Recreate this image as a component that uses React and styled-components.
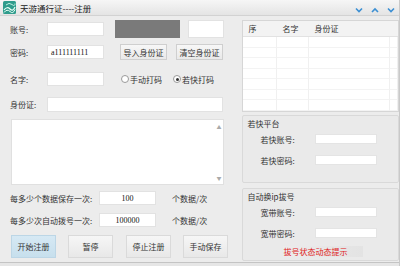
import React from 'react';
import styled, { createGlobalStyle } from 'styled-components';

const GlobalStyle = createGlobalStyle`
  html, body {
    margin: 0;
    padding: 0;
    background: #ececec;
  }
  * {
    box-sizing: border-box;
  }
`;

const Window = styled.div`
  width: 400px;
  height: 266px;
  background: #e6e6e6;
  font-family: "Noto Sans CJK SC", "Noto Sans", sans-serif;
  font-size: 8px;
  color: #333;
  display: flex;
  flex-direction: column;
  border-right: 1px solid #c9c9c9;
  overflow: hidden;
`;

const TitleBar = styled.div`
  height: 16px;
  display: flex;
  align-items: center;
  padding: 0 4px 0 3px;
  background: linear-gradient(#f6f6f6, #e4e4e4);
  border-bottom: 1px solid #d2d2d2;
  gap: 4px;
`;

const TitleText = styled.div`
  font-size: 8.5px;
  color: #222;
  flex: 1;
`;

const Controls = styled.div`
  display: flex;
  gap: 8px;
  padding-top: 4px;
`;

const Body = styled.div`
  height: 247px;
  display: flex;
  padding: 4px 0 0 10px;
  background: #ececec;
  border-bottom: 1px solid #c4c4c4;
`;

const LeftCol = styled.div`
  width: 230px;
  display: flex;
  flex-direction: column;
`;

const Row = styled.div`
  display: flex;
  align-items: center;
  height: ${p => p.h}px;
  margin-top: ${p => p.mt || 0}px;
`;

const Label = styled.div`
  width: ${p => p.w || 37}px;
  white-space: nowrap;
`;

const Field = styled.div`
  width: ${p => p.w || 57}px;
  height: ${p => p.h || 14}px;
  background: #fff;
  border: 1px solid #e2e2e2;
  margin-left: ${p => p.ml || 0}px;
  display: flex;
  align-items: center;
  justify-content: ${p => (p.center ? 'center' : 'flex-start')};
  padding-left: ${p => (p.center ? 0 : 3)}px;
  font-family: "Liberation Serif", serif;
  font-size: 8px;
  color: #111;
`;

const GrayBox = styled.div`
  width: 65px;
  height: 18px;
  margin-left: 11px;
  background: #7a7a7a;
`;

const SmallButton = styled.div`
  width: 47px;
  height: 16px;
  margin-left: ${p => p.ml}px;
  background: linear-gradient(#f7f7f7, #e9e9e9);
  border: 1px solid #cfcfcf;
  display: flex;
  align-items: center;
  justify-content: center;
  white-space: nowrap;
`;

const Radio = styled.div`
  display: flex;
  align-items: center;
  margin-left: ${p => p.ml}px;
  gap: 1px;
`;

const RadioDot = styled.span`
  width: 8px;
  height: 8px;
  border-radius: 50%;
  border: 1px solid #9a9a9a;
  background: #fff;
  display: flex;
  align-items: center;
  justify-content: center;
  &::after {
    content: '';
    width: 3px;
    height: 3px;
    border-radius: 50%;
    background: ${p => (p.checked ? '#333' : 'transparent')};
  }
`;

const TextArea = styled.div`
  width: 213px;
  height: 66px;
  margin-top: 6px;
  margin-left: 1px;
  background: #fff;
  border: 1px solid #e0e0e0;
  display: flex;
  justify-content: flex-end;
`;

const ScrollTrack = styled.div`
  width: 6px;
  display: flex;
  flex-direction: column;
  justify-content: space-between;
  align-items: center;
  padding: 3px 0;
  color: #aaa;
  font-size: 5px;
  margin-right: 1px;
`;

const Unit = styled.div`
  margin-left: 16px;
  white-space: nowrap;
`;

const ButtonRow = styled.div`
  display: flex;
  margin-top: 8px;
  margin-left: 1px;
  height: 23px;
`;

const ActionButton = styled.div`
  width: 45px;
  height: 23px;
  margin-left: ${p => p.ml || 0}px;
  display: flex;
  align-items: center;
  justify-content: center;
  background: ${p => (p.primary ? 'linear-gradient(#d6e9f4, #c7dfed)' : 'linear-gradient(#f6f6f6, #e8e8e8)')};
  border: 1px solid ${p => (p.primary ? '#bcd6e6' : '#dadada')};
  color: #333;
`;

const RightCol = styled.div`
  width: 157px;
  margin-left: 3px;
  display: flex;
  flex-direction: column;
`;

const Table = styled.div`
  height: 92px;
  border: 1px solid #d6d6d6;
  background: #fff;
  display: flex;
  flex-direction: column;
`;

const TableHead = styled.div`
  height: 16px;
  display: grid;
  grid-template-columns: 34px 32px 1fr;
  background: #f3f3f3;
  border-bottom: 1px solid #e2e2e2;
  align-items: center;
`;

const HeadCell = styled.div`
  padding-left: 5px;
`;

const TableBody = styled.div`
  flex: 1;
  display: grid;
  grid-template-columns: 34px 32px 1fr 8px;
  grid-auto-rows: 10.5px;
  overflow: hidden;
`;

const Cell = styled.div`
  border-right: 1px solid #f0f0f0;
  border-bottom: 1px solid #f3f3f3;
`;

const Group = styled.div`
  margin-top: ${p => p.mt}px;
  height: ${p => p.h}px;
  border: 1px solid #d9d9d9;
  border-radius: 2px;
  background: #eaeaea;
  padding: 3px 0 0 4px;
  display: flex;
  flex-direction: column;
`;

const GroupTitle = styled.div`
  height: 10px;
  line-height: 10px;
  white-space: nowrap;
`;

const GroupRow = styled.div`
  display: flex;
  align-items: center;
  height: 10px;
  margin-top: ${p => p.mt}px;
  padding-left: 13px;
`;

const GroupLabel = styled.div`
  width: 55px;
  white-space: nowrap;
`;

const GroupField = styled.div`
  width: 62px;
  height: 10px;
  background: #fff;
  border: 1px solid #e4e4e4;
`;

const Status = styled.div`
  margin: 8px 0 0 36px;
  width: 80px;
  height: 11px;
  display: flex;
  align-items: center;
  color: #e02020;
  background: linear-gradient(90deg, #ececec 0%, #e3e3e3 100%);
`;

const Chevron = ({ up }) => (
  <svg width="8" height="6" viewBox="0 0 8 6">
    <path
      d={up ? 'M1 5 L4 2 L7 5' : 'M1 1.5 L4 4.5 L7 1.5'}
      fill="none"
      stroke="#3b8fd3"
      strokeWidth="1.6"
    />
  </svg>
);

const AppIcon = () => (
  <svg width="13" height="13" viewBox="0 0 13 13">
    <rect x="0" y="0" width="13" height="13" rx="1.5" fill="#2f9c8c" />
    <path d="M1 9 Q4 5 7 8 T12 6" fill="none" stroke="#e8fff6" strokeWidth="1.2" />
    <path d="M1 11.5 Q4 7.5 7 10.5 T12 8.5" fill="none" stroke="#e8fff6" strokeWidth="1" />
    <path d="M3 4 Q6 1 9 3.5 T12 2.5" fill="none" stroke="#bdeee0" strokeWidth="1" />
  </svg>
);

const rows = Array.from({ length: 7 });

export default function App() {
  return (
    <>
      <GlobalStyle />
      <Window>
        <TitleBar>
          <AppIcon />
          <TitleText>天游通行证----注册</TitleText>
          <Controls>
            <Chevron />
            <Chevron up />
            <Chevron />
          </Controls>
        </TitleBar>
        <Body>
          <LeftCol>
            <Row h={18}>
              <Label>账号:</Label>
              <Field />
              <GrayBox />
              <Field w={36} h={18} ml={8} />
            </Row>
            <Row h={16} mt={6}>
              <Label>密码:</Label>
              <Field>a111111111</Field>
              <SmallButton ml={16}>导入身份证</SmallButton>
              <SmallButton ml={9}>清空身份证</SmallButton>
            </Row>
            <Row h={18} mt={10}>
              <Label>名字:</Label>
              <Field />
              <Radio ml={17}>
                <RadioDot />
                手动打码
              </Radio>
              <Radio ml={11}>
                <RadioDot checked />
                若快打码
              </Radio>
            </Row>
            <Row h={17} mt={8}>
              <Label>身份证:</Label>
              <Field w={176} h={15} />
            </Row>
            <TextArea>
              <ScrollTrack>
                <span>▲</span>
                <span>▼</span>
              </ScrollTrack>
            </TextArea>
            <Row h={14} mt={6}>
              <Label w={89}>每多少个数据保存一次:</Label>
              <Field center>100</Field>
              <Unit>个数据/次</Unit>
            </Row>
            <Row h={14} mt={8}>
              <Label w={89}>每多少次自动拨号一次:</Label>
              <Field center>100000</Field>
              <Unit>个数据/次</Unit>
            </Row>
            <ButtonRow>
              <ActionButton primary>开始注册</ActionButton>
              <ActionButton ml={12}>暂停</ActionButton>
              <ActionButton ml={13}>停止注册</ActionButton>
              <ActionButton ml={12}>手动保存</ActionButton>
            </ButtonRow>
          </LeftCol>
          <RightCol>
            <Table>
              <TableHead>
                <HeadCell>序</HeadCell>
                <HeadCell>名字</HeadCell>
                <HeadCell>身份证</HeadCell>
              </TableHead>
              <TableBody>
                {rows.map((_, i) => (
                  <React.Fragment key={i}>
                    <Cell />
                    <Cell />
                    <Cell />
                    <Cell />
                  </React.Fragment>
                ))}
              </TableBody>
            </Table>
            <Group mt={3} h={68}>
              <GroupTitle>若快平台</GroupTitle>
              <GroupRow mt={5}>
                <GroupLabel>若快账号:</GroupLabel>
                <GroupField />
              </GroupRow>
              <GroupRow mt={11}>
                <GroupLabel>若快密码:</GroupLabel>
                <GroupField />
              </GroupRow>
            </Group>
            <Group mt={5} h={73}>
              <GroupTitle>自动换ip拔号</GroupTitle>
              <GroupRow mt={5}>
                <GroupLabel>宽带账号:</GroupLabel>
                <GroupField />
              </GroupRow>
              <GroupRow mt={11}>
                <GroupLabel>宽带密码:</GroupLabel>
                <GroupField />
              </GroupRow>
              <Status>拔号状态动态提示</Status>
            </Group>
          </RightCol>
        </Body>
      </Window>
    </>
  );
}
